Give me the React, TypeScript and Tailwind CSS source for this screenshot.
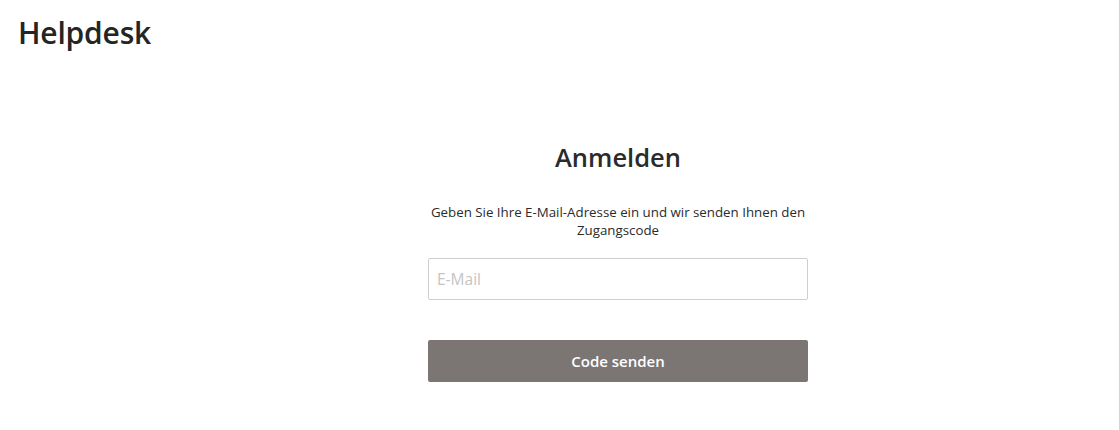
import React, { useState } from 'react';

export default function App() {
  const [email, setEmail] = useState('');
  return <div className="min-h-[430px] bg-white text-[#252525]" style={{
    fontFamily: '"Open Sans", "Noto Sans", sans-serif'
  }}>
      <header className="px-[18px] pt-[13px]">
        <h1 className="text-[30px] font-semibold leading-[40px] tracking-[-0.2px]">Helpdesk</h1>
      </header>
      {/* Login form */}
      <main className="ml-[428px] w-[380px] pt-[87px]">
        <h2 className="text-center text-[25.5px] font-semibold leading-[34px] text-[#2b2b2b]">Anmelden</h2>
        <p className="mt-[29px] text-center text-[13.3px] leading-[18px] text-[#2b2b2b]">
          Geben Sie Ihre E-Mail-Adresse ein und wir senden Ihnen den Zugangscode
        </p>
        <input type="email" value={email} onChange={e => setEmail(e.target.value)} placeholder="E-Mail" className="mt-[19px] block h-[42px] w-full rounded-[2px] border border-[#cfcfcf] px-[8px] text-[15.5px] outline-none placeholder:text-[#c4c4c4]" />
        <button className="mt-[40px] block h-[42px] w-full rounded-[2px] bg-[#7b7574] text-[15px] font-semibold text-white">
          Code senden
        </button>
      </main>
    </div>;
}
